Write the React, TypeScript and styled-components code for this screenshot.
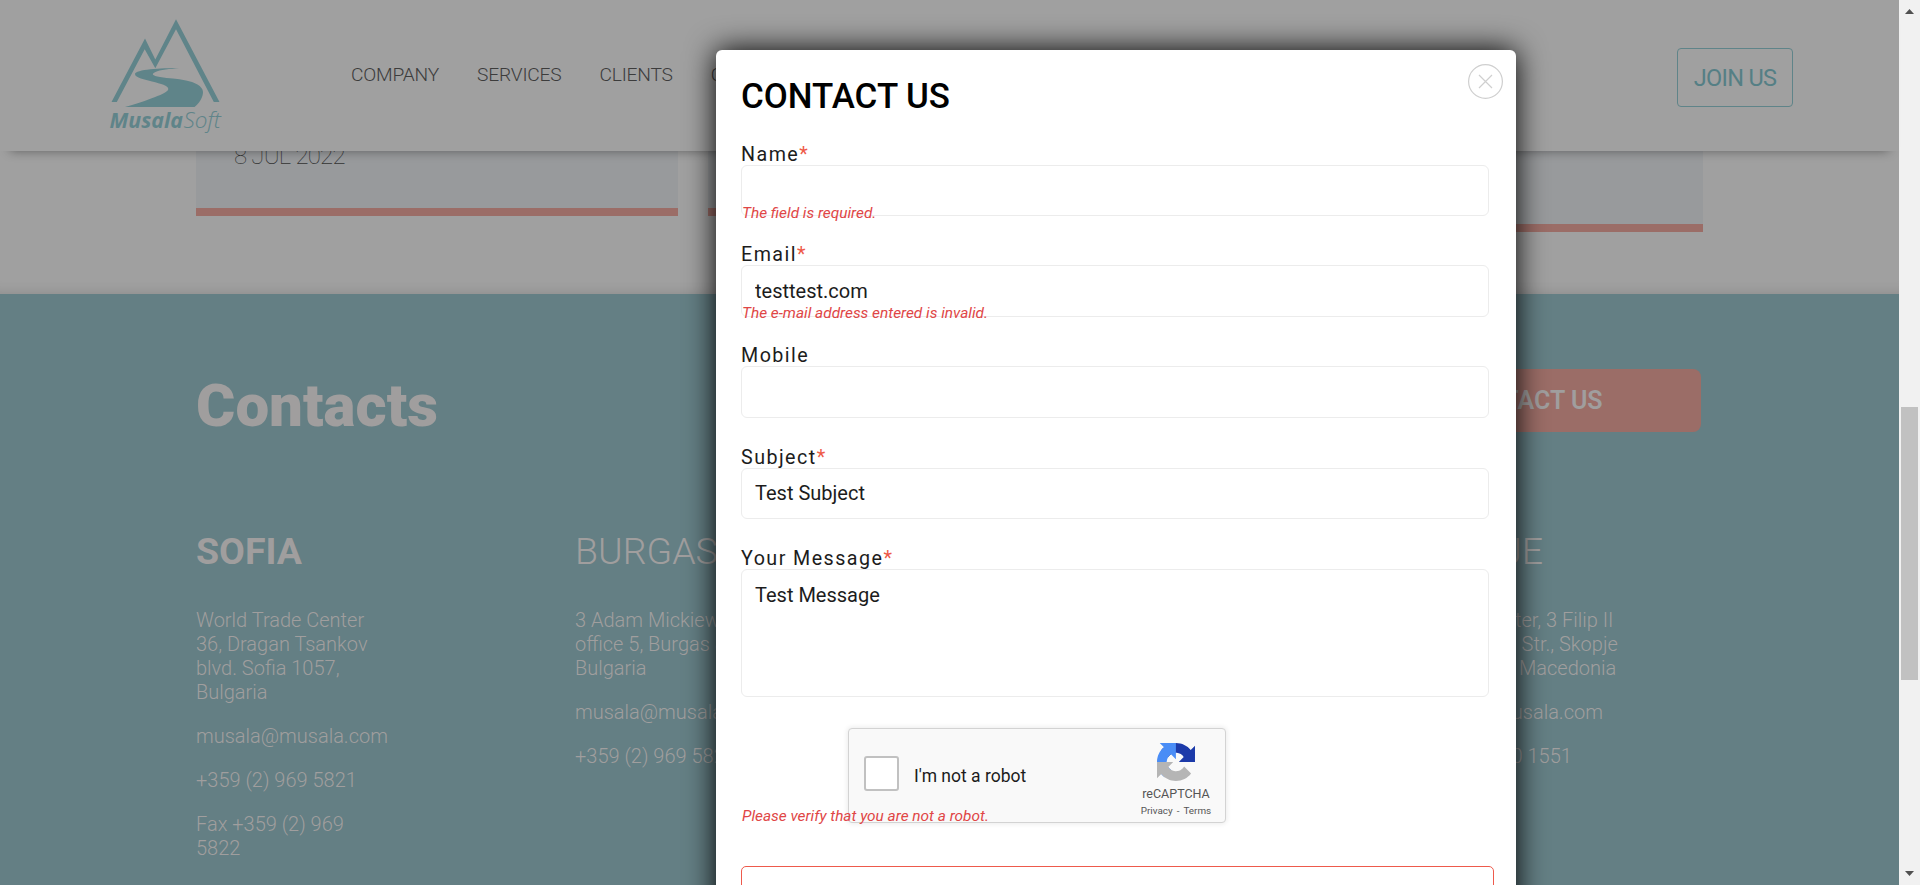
import React from 'react';
import styled, { createGlobalStyle } from 'styled-components';

const GlobalStyle = createGlobalStyle`
  *, *::before, *::after { box-sizing: border-box; }
  html, body { margin: 0; padding: 0; overflow: hidden; }
  body { font-family: Roboto, "Liberation Sans", sans-serif; background: #a0a0a0; }
  p, h1, h2, h3 { margin: 0; }
`;

const Screen = styled.div`
  position: relative;
  display: flex;
  width: 1920px;
  height: 885px;
  overflow: hidden;
`;

const Page = styled.div`
  flex: 1;
  min-width: 0;
  display: flex;
  flex-direction: column;
  background: #a0a0a0;
`;

const Header = styled.header`
  position: relative;
  z-index: 2;
  height: 151px;
  flex: none;
  display: flex;
  align-items: flex-start;
  padding: 0 106px 0 110px;
  background: #a0a0a0;
  box-shadow: 0 10px 10px -10px rgba(0, 0, 0, 0.4);
`;

const LogoSvg = styled.svg`
  width: 112px;
  height: 120px;
  margin-top: 15px;
  flex: none;
  overflow: visible;
`;

const Nav = styled.nav`
  display: flex;
  gap: 38px;
  margin: 62px 0 0 129px;
  flex: 1;
`;

const NavLink = styled.a`
  font-size: 19.2px;
  font-weight: 300;
  line-height: 25px;
  letter-spacing: -0.2px;
  color: #3c3c3c;
`;

const JoinButton = styled.button`
  width: 116px;
  height: 59px;
  margin-top: 48px;
  padding: 0;
  border: 1px solid #5f8489;
  border-radius: 4px;
  background: transparent;
  color: #557f85;
  font: 400 23.5px/56px Roboto, sans-serif;
  letter-spacing: -0.7px;
`;

const News = styled.section`
  height: 143px;
  flex: none;
  display: flex;
  align-items: flex-start;
  gap: 30px;
  padding: 0 196px;
  box-shadow: inset 0 -14px 14px -14px rgba(0, 0, 0, 0.14);
`;

const NewsCard = styled.article<{ $height: number }>`
  flex: 1;
  height: ${(p) => p.$height}px;
  padding: 0 38px;
  background: #989a9c;
  border-bottom: 8px solid #9b6d67;
`;

const NewsDate = styled.p`
  margin-top: -8px;
  font-size: 24px;
  font-weight: 100;
  line-height: 27px;
  letter-spacing: -0.8px;
  color: #333;
`;

const Contacts = styled.section`
  flex: 1;
  padding: 75px 198px 0 196px;
  background: #647f84;
  color: #a09e9e;
`;

const ContactsTop = styled.div`
  display: flex;
  justify-content: space-between;
  height: 147px;
`;

const ContactsTitle = styled.h1`
  font-size: 60px;
  font-weight: 900;
  line-height: 70px;
  margin-top: 2px;
`;

const ContactButton = styled.button`
  width: 347px;
  height: 63px;
  border: 0;
  border-radius: 8px;
  background: #9b6d67;
  color: #a09e9e;
  font: 600 25px/64px Roboto, sans-serif;
  padding: 0;
`;

const Offices = styled.div`
  display: grid;
  grid-template-columns: 379px 379px 457px 290px;
`;

const OfficeName = styled.h2<{ $active?: boolean }>`
  font-size: 37.5px;
  line-height: 44px;
  font-weight: ${(p) => (p.$active ? 700 : 300)};
  margin-top: 13px;
  margin-bottom: 35px;
`;

const OfficeText = styled.p`
  font-size: 20px;
  line-height: 24px;
  font-weight: 300;
  margin-bottom: 20px;
  white-space: pre-line;
`;

const OfficeColumn = styled.div<{ $column: number }>`
  grid-column: ${(p) => p.$column};
`;

const ScrollTrack = styled.div`
  width: 21px;
  display: flex;
  flex-direction: column;
  align-items: center;
  background: #f1f1f1;
  padding: 9px 2px;
`;

const ScrollThumb = styled.div`
  width: 17px;
  height: 273px;
  margin: 393px 0 191px;
  background: #c1c1c1;
`;

const Modal = styled.section`
  position: absolute;
  z-index: 5;
  left: 716px;
  top: 50px;
  width: 800px;
  height: 900px;
  padding: 27px 22px 0 25px;
  background: #fff;
  border-radius: 6px;
  box-shadow: 0 0 30px #000;
`;

const CloseButton = styled.button`
  position: absolute;
  right: 13px;
  top: 14px;
  width: 35px;
  height: 35px;
  padding: 0;
  border: 0;
  background: none;
  svg { display: block; }
`;

const ModalTitle = styled.h2`
  height: 66px;
  font-size: 34.9px;
  font-weight: 500;
  line-height: 40px;
  color: #000;
`;

const Field = styled.div<{ $gap: number }>`
  position: relative;
  width: 748px;
  margin-bottom: ${(p) => p.$gap}px;
`;

const Label = styled.label`
  display: block;
  height: 22px;
  font-size: 19.7px;
  font-weight: 400;
  line-height: 24px;
  letter-spacing: 1.45px;
  color: #1c1c1c;
`;

const Required = styled.span`
  color: #ee5a48;
`;

const Input = styled.input<{ $height: number }>`
  position: relative;
  display: block;
  width: 100%;
  height: ${(p) => p.$height}px;
  padding: 0 13px 1px;
  border: 1px solid #ececec;
  border-radius: 6px;
  background: #fff;
  color: #1c1c1c;
  font: 400 20px/24px Roboto, sans-serif;
  outline: none;
`;

const TextArea = styled.textarea`
  position: relative;
  display: block;
  width: 100%;
  height: 128px;
  padding: 13px;
  border: 1px solid #ececec;
  border-radius: 6px;
  background: #fff;
  color: #1c1c1c;
  font: 400 20px/24px Roboto, sans-serif;
  outline: none;
  resize: none;
`;

const ErrorText = styled.span<{ $drop?: number }>`
  position: absolute;
  left: 1px;
  bottom: ${(p) => -(p.$drop ?? 6)}px;
  font-size: 15.4px;
  line-height: 18px;
  font-style: italic;
  color: #e04646;
  white-space: nowrap;
`;

const CaptchaRow = styled.div`
  position: relative;
  width: 748px;
  padding-left: 107px;
`;

const Captcha = styled.div`
  display: flex;
  align-items: flex-start;
  width: 378px;
  height: 95px;
  background: #f9f9f9;
  border: 1px solid #d3d3d3;
  border-radius: 4px;
  box-shadow: 0 0 5px 1px rgba(0, 0, 0, 0.08);
`;

const CheckSquare = styled.span`
  width: 35px;
  height: 35px;
  margin: 27px 15px 0 15px;
  border: 2px solid #c1c1c1;
  border-radius: 3px;
  background: #fff;
`;

const CaptchaLabel = styled.span`
  flex: 1;
  margin-top: 36px;
  font-size: 17.5px;
  line-height: 22px;
  color: #1c1c1c;
`;

const CaptchaBrand = styled.div`
  display: flex;
  flex-direction: column;
  align-items: center;
  width: 98px;
  margin-top: 14px;
  color: #555;
`;

const BrandName = styled.span`
  margin-top: 4px;
  font-size: 12.5px;
  line-height: 17px;
`;

const BrandLinks = styled.span`
  display: flex;
  gap: 4px;
  margin-top: 2px;
  font-size: 9.9px;
  line-height: 13px;
`;

const SendButton = styled.button`
  display: block;
  width: 753px;
  height: 60px;
  margin-top: 43px;
  border: 1px solid #ee5a4c;
  border-radius: 5px;
  background: #fff;
`;

const Logo = () => (
  <LogoSvg viewBox="0 0 112 120">
    <g fill="#5f8489">
      <path d="M1.500 87 35 23.500 45.300 44.500 66 4.300 109.500 87h-5.700L66 14.300 45.300 53.200 34.700 34.300 6.800 87z" />
      <path d="M69.300 53C51 53 25.300 54.500 25 59c0 4 10 5.500 17 7.500 9 2.300 16.300 4 16.300 7.500 0 3-9 6.500-16.600 9.300C32 87 23 90 15 92h69.500c5-4 8.500-9.500 8.500-15 0-6-9-10-17-11.500C67 63.500 59 63.500 50 62c-8-1.300-9-3-4.500-5 4-2.200 15-3 23.800-4z" />
      <text x="-0.500" y="112.600" fontFamily="'Open Sans', 'Noto Sans', sans-serif" fontSize="21.500" fontStyle="italic" fontWeight="700" textLength="73.500" lengthAdjust="spacingAndGlyphs">Musala</text>
      <text x="73.500" y="112.600" fontFamily="'Open Sans', 'Noto Sans', sans-serif" fontSize="21.500" fontStyle="italic" fontWeight="300" textLength="37.500" lengthAdjust="spacingAndGlyphs">Soft</text>
    </g>
  </LogoSvg>
);

const CaptchaLogo = () => (
  <svg width="38" height="38" viewBox="0 0 64 64">
    <path fill="#1c3aa9" d="M64 31.955a33 33 0 00-.033-1.37V4.687l-7.16 7.16C50.948 4.674 42.033.093 32.05.093c-10.389 0-19.622 4.96-25.458 12.64l11.736 11.86a15.55 15.55 0 014.754-5.334c2.05-1.6 4.952-2.906 8.968-2.906.485 0 .86.057 1.135.163 4.976.393 9.288 3.14 11.828 7.124l-8.307 8.307L64 31.953" />
    <path fill="#4a8df6" d="M31.862.094a33 33 0 00-1.37.033H4.594l7.16 7.16C4.58 13.147 0 22.06 0 32.046c0 10.388 4.96 19.622 12.64 25.458L24.5 45.768a15.55 15.55 0 01-5.334-4.754c-1.6-2.05-2.906-4.952-2.906-8.968 0-.485.057-.86.163-1.135.393-4.976 3.14-9.288 7.124-11.828l8.307 8.307L31.86.095" />
    <path fill="#b5b5b5" d="M.001 32.045a33 33 0 00.033 1.37v25.898l7.16-7.16c5.86 7.173 14.774 11.754 24.76 11.754 10.388 0 19.622-4.96 25.458-12.64l-11.736-11.86a15.55 15.55 0 01-4.754 5.334c-2.05 1.6-4.952 2.906-8.968 2.906-.485 0-.86-.057-1.135-.163-4.976-.393-9.288-3.14-11.828-7.124l8.307-8.307c-10.522.04-22.4.066-27.295-.005" />
  </svg>
);

const offices = [
  {
    name: 'SOFIA',
    column: 1,
    active: true,
    lines: [
      'World Trade Center\n36, Dragan Tsankov\nblvd. Sofia 1057,\nBulgaria',
      'musala@musala.com',
      '+359 (2) 969 5821',
      'Fax +359 (2) 969\n5822',
    ],
  },
  {
    name: 'BURGAS',
    column: 2,
    lines: ['3 Adam Mickiewicz\noffice 5, Burgas 8000\nBulgaria', 'musala@musala.com', '+359 (2) 969 5821'],
  },
  {
    name: 'SKOPJE',
    column: 4,
    lines: ['Soravia Center, 3 Filip II\nMakedonski Str., Skopje\n1000, North Macedonia', 'musala@musala.com', '+389 (2) 520 1551'],
  },
];

export default function App() {
  return (
    <>
      <GlobalStyle />
      <Screen>
        <Page>
          <Header>
            <Logo />
            <Nav>
              <NavLink>COMPANY</NavLink>
              <NavLink>SERVICES</NavLink>
              <NavLink>CLIENTS</NavLink>
              <NavLink>CAREERS</NavLink>
            </Nav>
            <JoinButton>JOIN US</JoinButton>
          </Header>
          <News>
            <NewsCard $height={65}>
              <NewsDate>8 JUL 2022</NewsDate>
            </NewsCard>
            <NewsCard $height={65} />
            <NewsCard $height={81} />
          </News>
          <Contacts>
            <ContactsTop>
              <ContactsTitle>Contacts</ContactsTitle>
              <ContactButton>CONTACT US</ContactButton>
            </ContactsTop>
            <Offices>
              {offices.map((office) => (
                <OfficeColumn key={office.name} $column={office.column}>
                  <OfficeName $active={office.active}>{office.name}</OfficeName>
                  {office.lines.map((line) => (
                    <OfficeText key={line}>{line}</OfficeText>
                  ))}
                </OfficeColumn>
              ))}
            </Offices>
          </Contacts>
        </Page>
        <ScrollTrack>
          <svg width="9" height="5" viewBox="0 0 9 5"><path d="M4.500 0 9 5H0z" fill="#505050" /></svg>
          <ScrollThumb />
          <svg width="9" height="5" viewBox="0 0 9 5"><path d="M0 0h9L4.500 5z" fill="#505050" /></svg>
        </ScrollTrack>
        <Modal>
          <CloseButton aria-label="Close">
            <svg width="35" height="35" viewBox="0 0 35 35" fill="none" stroke="#cfcfcf" strokeWidth="1.200">
              <circle cx="17.500" cy="17.500" r="16.900" />
              <path d="M11 11l13 13M24 11 11 24" />
            </svg>
          </CloseButton>
          <ModalTitle>CONTACT US</ModalTitle>
          <Field $gap={27}>
            <Label>Name<Required>*</Required></Label>
            <Input $height={51} defaultValue="" />
            <ErrorText>The field is required.</ErrorText>
          </Field>
          <Field $gap={27}>
            <Label>Email<Required>*</Required></Label>
            <Input $height={52} defaultValue="testtest.com" />
            <ErrorText $drop={5}>The e-mail address entered is invalid.</ErrorText>
          </Field>
          <Field $gap={28}>
            <Label>Mobile</Label>
            <Input $height={52} defaultValue="" />
          </Field>
          <Field $gap={28}>
            <Label>Subject<Required>*</Required></Label>
            <Input $height={51} defaultValue="Test Subject" />
          </Field>
          <Field $gap={31}>
            <Label>Your Message<Required>*</Required></Label>
            <TextArea defaultValue="Test Message" />
          </Field>
          <CaptchaRow>
            <Captcha>
              <CheckSquare />
              <CaptchaLabel>I'm not a robot</CaptchaLabel>
              <CaptchaBrand>
                <CaptchaLogo />
                <BrandName>reCAPTCHA</BrandName>
                <BrandLinks><span>Privacy</span><span>-</span><span>Terms</span></BrandLinks>
              </CaptchaBrand>
            </Captcha>
            <ErrorText $drop={2}>Please verify that you are not a robot.</ErrorText>
          </CaptchaRow>
          <SendButton aria-label="Send" />
        </Modal>
      </Screen>
    </>
  );
}
